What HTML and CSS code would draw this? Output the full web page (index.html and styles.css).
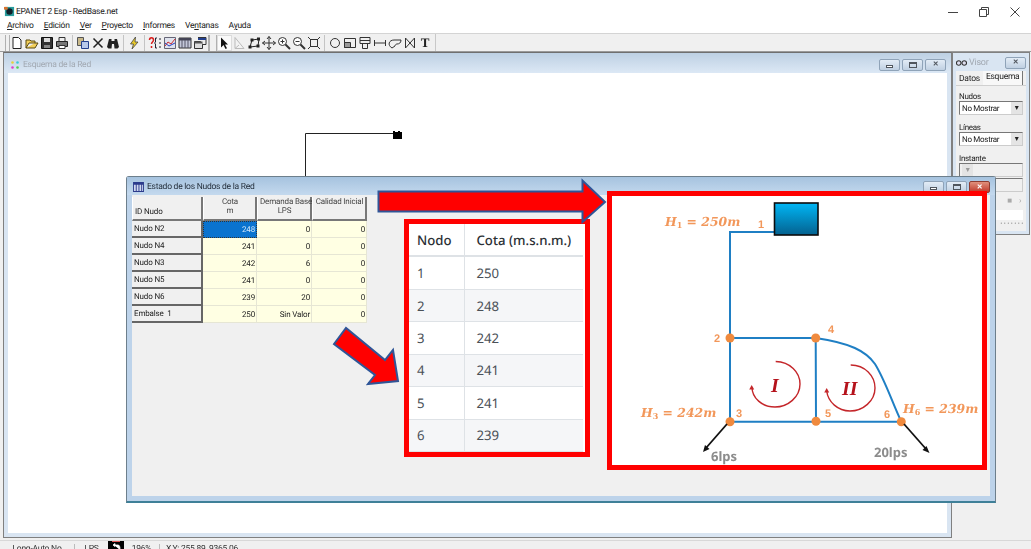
FILE: index.html
```html
<!DOCTYPE html>
<html lang="en">
<head>
  <meta charset="UTF-8">
  <title>EPANET 2 Esp - RedBase.net</title>
  <link rel="stylesheet" href="styles.css">
</head>
<body>
  <header class="titlebar">
    <svg class="app-icon" viewBox="0 0 12 12"><rect x="1" y="1" width="10" height="10" fill="#2a9d9d"/><circle cx="6" cy="6" r="3.5" fill="#10202a"/><rect x="0" y="1" width="4" height="3" fill="#d9722e"/></svg>
    <span class="app-name">EPANET 2 Esp - RedBase.net</span>
    <div class="win-controls">
      <svg viewBox="0 0 10 10"><path d="M0 5.5H10" stroke="#444"/></svg>
      <svg viewBox="0 0 10 10"><path d="M.5 2.5h7v7h-7zM2.5 2.5v-2h7v7h-2" fill="none" stroke="#444"/></svg>
      <svg viewBox="0 0 10 10"><path d="M.5 .5l9 9M9.5 .5l-9 9" stroke="#444"/></svg>
    </div>
  </header>

  <nav class="menubar">
    <span><u>A</u>rchivo</span>
    <span><u>E</u>dición</span>
    <span><u>V</u>er</span>
    <span><u>P</u>royecto</span>
    <span><u>I</u>nformes</span>
    <span>Ve<u>n</u>tanas</span>
    <span>A<u>y</u>uda</span>
  </nav>

  <div class="toolbar">
    <div class="tools">
      <i class="grip"></i>
      <b class="tool"><svg viewBox="0 0 14 14"><path d="M3 1.5h5.5l2.5 2.5v8.5H3z" fill="#fff" stroke="#222"/></svg></b>
      <b class="tool"><svg viewBox="0 0 14 14"><path d="M1 12V4h4l1 1h4v2H4l-3 5h9l3-5H10" fill="#f2cf5a" stroke="#5a4a10"/></svg></b>
      <b class="tool"><svg viewBox="0 0 14 14"><path d="M1.5 1.5h11v11h-11z" fill="#333" stroke="#111"/><path d="M4 2h6v4H4z" fill="#ddd"/><path d="M4 9h6v3H4z" fill="#888"/></svg></b>
      <b class="tool"><svg viewBox="0 0 14 14"><path d="M4 1.5h6v4H4z" fill="#eee" stroke="#333"/><path d="M1.5 5.5h11v5h-11z" fill="#777" stroke="#222"/><path d="M4 9.5h6v3H4z" fill="#fff" stroke="#333"/></svg></b>
      <i class="sep"></i>
      <b class="tool"><svg viewBox="0 0 14 14"><path d="M1.5 1.5h6v8h-6z" fill="#c9b98a" stroke="#555"/><path d="M5.5 5.5h7v7h-7z" fill="#b7c8ea" stroke="#24408e"/></svg></b>
      <b class="tool"><svg viewBox="0 0 14 14"><path d="M2.5 2.5l9 9M11.5 2.5l-9 9" stroke="#222" stroke-width="1.5"/></svg></b>
      <b class="tool"><svg viewBox="0 0 14 14"><path d="M1 11l2-8h2.5v2h3V3H11l2 8-1.5 1.5h-3L8 8H6l-.5 4.5h-3z" fill="#222"/></svg></b>
      <i class="sep"></i>
      <b class="tool"><svg viewBox="0 0 14 14"><path d="M8.5 1L3.5 8h3L5 13l6-7H8z" fill="#e8c92a" stroke="#444" stroke-width=".8"/></svg></b>
      <i class="sep"></i>
      <b class="tool"><svg viewBox="0 0 14 14"><path d="M1.500 4c0-3 4-3 4 0 0 2-2 2-2 4M3.500 10v2" fill="none" stroke="#d81e1e" stroke-width="1.500"/><path d="M9 2H7.500v4l-1 1 1 1v4H9M11 3h2M11 7h2M11 11h2" fill="none" stroke="#223"/></svg></b>
      <b class="tool"><svg viewBox="0 0 14 14"><path d="M1.500 1.500h11v11h-11z" fill="#dfe3ee" stroke="#667"/><path d="M2 10l3-4 3 2 4-5" fill="none" stroke="#d02a2a"/><path d="M2 7l4 3 6-3" fill="none" stroke="#2a40c0"/></svg></b>
      <b class="tool"><svg viewBox="0 0 14 14"><path d="M1 2h12v10H1z" fill="#c4c8da" stroke="#333"/><path d="M1 2h12v2.500H1z" fill="#445"/><path d="M4 4v8M7 4v8M10 4v8" stroke="#556"/></svg></b>
      <b class="tool"><svg viewBox="0 0 14 14"><path d="M1.500 5.500h8v7h-8z" fill="#ddd" stroke="#333"/><path d="M5 1.500h8v7h-3" fill="#eee" stroke="#333"/><path d="M5 2h8v2H5z" fill="#24408e"/><path d="M1.500 5.500h8v2h-8z" fill="#555"/></svg></b>
      <i class="grip wide"></i>
      <b class="tool on"><svg viewBox="0 0 14 14"><path d="M4 1.500v10l2.500-2.500 2 4 1.500-.8-2-3.700H11z" fill="#111"/></svg></b>
      <b class="tool"><svg viewBox="0 0 14 14"><path d="M3 1.500v11h9z M3 12.500L7 9" fill="#f3f3f3" stroke="#bbb"/></svg></b>
      <b class="tool"><svg viewBox="0 0 14 14"><path d="M3 11L5 4l7-1-1 7z" fill="none" stroke="#222"/><path d="M1.500 9.500h3v3h-3zM3.500 2.500h3v3h-3zM10 1.500h3v3h-3zM9.500 8.500h3v3h-3z" fill="#222"/></svg></b>
      <b class="tool"><svg viewBox="0 0 14 14"><path d="M7 .5v13M.5 7h13M5 3l2-2.500L9 3M5 11l2 2.500L9 11M3 5L.5 7 3 9M11 5l2.500 2L11 9" fill="none" stroke="#333"/></svg></b>
      <b class="tool"><svg viewBox="0 0 14 14"><circle cx="5.500" cy="5.500" r="4" fill="#fff" stroke="#333"/><path d="M8.500 8.500l4.500 4.500" stroke="#333" stroke-width="2"/><path d="M3.500 5.500h4M5.500 3.500v4" stroke="#333"/></svg></b>
      <b class="tool"><svg viewBox="0 0 14 14"><circle cx="5.500" cy="5.500" r="4" fill="#fff" stroke="#333"/><path d="M8.500 8.500l4.500 4.500" stroke="#333" stroke-width="2"/><path d="M3.500 5.500h4" stroke="#333"/></svg></b>
      <b class="tool"><svg viewBox="0 0 14 14"><path d="M3.500 3.500h7v7h-7z" fill="none" stroke="#333"/><path d="M1 1l3 3M13 1l-3 3M1 13l3-3M13 13l-3-3" stroke="#333"/></svg></b>
      <i class="sep"></i>
      <b class="tool"><svg viewBox="0 0 14 14"><circle cx="7" cy="7" r="4.500" fill="none" stroke="#333"/></svg></b>
      <b class="tool"><svg viewBox="0 0 14 14"><path d="M1.500 2.500h11v9h-11z" fill="none" stroke="#333"/><path d="M1.500 6.500h6v5h-6z" fill="#999" stroke="#333"/></svg></b>
      <b class="tool"><svg viewBox="0 0 14 14"><path d="M2 1.500h10v6H2zM4.500 7.500v5h5v-5M2 4.500h10" fill="none" stroke="#333"/></svg></b>
      <b class="tool"><svg viewBox="0 0 14 14"><path d="M1.500 4v6M12.500 4v6M1.500 7h11" stroke="#333"/></svg></b>
      <b class="tool"><svg viewBox="0 0 14 14"><path d="M4 12c-5-3-3-8 2-8h7c0 3-2 4-4 4-1 0-2 1-2 2z" fill="none" stroke="#333"/></svg></b>
      <b class="tool"><svg viewBox="0 0 14 14"><path d="M2.500 2v10l9-10v10z" fill="none" stroke="#333"/></svg></b>
      <b class="tool text-tool">T</b>
    </div>
  </div>

  <main class="workspace">
    <section class="window network-win">
      <div class="win-title">
        <svg class="dots" viewBox="0 0 8 8"><circle cx="1.500" cy="1.500" r="1.300" fill="#e8d23a"/><circle cx="6.500" cy="1.500" r="1.300" fill="#3ac8d8"/><circle cx="1.500" cy="6.500" r="1.300" fill="#e040c8"/><circle cx="6.500" cy="6.500" r="1.300" fill="#50d050"/></svg>
        <span>Esquema de la Red</span>
        <div class="win-btns">
          <b class="btn"><em class="g-min"></em></b><b class="btn"><em class="g-max"></em></b><b class="btn"><em class="g-x">✕</em></b>
        </div>
      </div>
      <div class="canvas">
        <svg class="network" width="938" height="120" viewBox="8 73 938 120">
          <path d="M305.500 176V133.500H395" fill="none" stroke="#222"/>
          <path d="M393 131h2v1h3v-1h2v1h2v7h-9z" fill="#000"/>
        </svg>
      </div>
    </section>

    <aside class="window visor">
      <div class="visor-title">
        <svg class="eyes" viewBox="0 0 12 8"><circle cx="3" cy="4" r="2.500" fill="#dde" stroke="#333" stroke-width="1.200"/><circle cx="9" cy="4" r="2.500" fill="#dde" stroke="#333" stroke-width="1.200"/></svg>
        <span>Visor</span>
        <b class="btn"><em class="g-x">✕</em></b>
      </div>
      <div class="tabs"><span>Datos</span><span class="tab-on">Esquema</span></div>
      <div class="panel">
        <label>Nudos</label>
        <div class="combo">No Mostrar<i>▾</i></div>
        <label>Líneas</label>
        <div class="combo">No Mostrar<i>▾</i></div>
        <label>Instante</label>
        <div class="combo off"><i>▾</i></div>
        <div class="combo off"><i>▸</i></div>
        <div class="play"><b>■</b><span>›</span></div>
        <div class="speed"></div>
        <div class="ticks">· · · · · · ·</div>
      </div>
    </aside>

    <section class="window status-win">
      <div class="win-title">
        <svg class="grid-icon" viewBox="0 0 12 11"><path d="M0 0h12v11H0z" fill="#2b3a8c"/><path d="M1 3h2v7H1zM4 3h2v7H4zM7 3h2v7H7zM10 3h1v7h-1z" fill="#cfd6ee"/></svg>
        <span>Estado de los Nudos de la Red</span>
        <div class="win-btns">
          <b class="btn"><em class="g-min"></em></b><b class="btn"><em class="g-max"></em></b><b class="btn btn-close"><em class="g-x">✕</em></b>
        </div>
      </div>
      <div class="win-body">
        <table class="grid">
          <thead>
            <tr><th class="id-head">ID Nudo</th><th>Cota<br>m</th><th>Demanda Base<br>LPS</th><th>Calidad Inicial</th></tr>
          </thead>
          <tbody>
            <tr><th>Nudo N2</th><td class="sel">248</td><td>0</td><td>0</td></tr>
            <tr><th>Nudo N4</th><td>241</td><td>0</td><td>0</td></tr>
            <tr><th>Nudo N3</th><td>242</td><td>6</td><td>0</td></tr>
            <tr><th>Nudo N5</th><td>241</td><td>0</td><td>0</td></tr>
            <tr><th>Nudo N6</th><td>239</td><td>20</td><td>0</td></tr>
            <tr><th>Embalse&nbsp; 1</th><td>250</td><td>Sin Valor</td><td>0</td></tr>
          </tbody>
        </table>
      </div>
    </section>

    <div class="note-table">
      <table>
        <thead><tr><th>Nodo</th><th>Cota (m.s.n.m.)</th></tr></thead>
        <tbody>
          <tr><td>1</td><td>250</td></tr>
          <tr><td>2</td><td>248</td></tr>
          <tr><td>3</td><td>242</td></tr>
          <tr><td>4</td><td>241</td></tr>
          <tr><td>5</td><td>241</td></tr>
          <tr><td>6</td><td>239</td></tr>
        </tbody>
      </table>
    </div>

    <div class="note-diagram">
      <svg width="370" height="269" viewBox="612 196 370 269">
        <defs>
          <linearGradient id="water" x1="0" y1="0" x2="0" y2="1"><stop offset="0" stop-color="#00b6f5"/><stop offset="1" stop-color="#04618f"/></linearGradient>
        </defs>
        <g fill="none" stroke="#1f7fc4" stroke-width="2">
          <path d="M774 232H730V421.700H901.300"/>
          <path d="M730 338H815.700L816 421.700"/>
          <path d="M815.700 338C850 343 866 351 875 364C885 380 892 402 901.300 421.700"/>
        </g>
        <rect x="774.500" y="203" width="43.500" height="32" fill="url(#water)" stroke="#0c0c0c" stroke-width="1.600"/>
        <g fill="#f08a3e">
          <circle cx="730" cy="338" r="4.500"/><circle cx="815.700" cy="338" r="4.500"/><circle cx="730" cy="421.700" r="4.500"/><circle cx="816" cy="421.300" r="4.500"/><circle cx="901.300" cy="421.700" r="4.500"/>
        </g>
        <g stroke="#111" stroke-width="1.800" fill="#111">
          <path d="M727 424L706 448"/><path d="M703 452l2-7 4.500 4z" stroke="none"/>
          <path d="M904 424L926 449"/><path d="M929.500 453l-7-3 4-4z" stroke="none"/>
        </g>
        <g fill="none" stroke="#c4262a" stroke-width="1.400">
          <path d="M775.700 361.500C790 362 800 372 800 384C800 397 788 407 775 407C762 407 752 398 752 387"/>
          <path d="M850.700 365C865 365 875 376 875 388C875 401 863 411 850 411C838 411 828 402 826.700 391"/>
        </g>
        <g fill="#c4262a"><path d="M751.700 385l-2.500 4.500h5z"/><path d="M826.700 388l-2.500 4.500h5z"/></g>
        <g class="eq">
          <text x="665" y="226">H<tspan class="sub" dy="2">1</tspan><tspan dy="-2"> = 250m</tspan></text>
          <text x="641" y="417">H<tspan class="sub" dy="2">3</tspan><tspan dy="-2"> = 242m</tspan></text>
          <text x="903" y="413">H<tspan class="sub" dy="2">6</tspan><tspan dy="-2"> = 239m</tspan></text>
        </g>
        <g class="num">
          <text x="758" y="228">1</text><text x="714" y="342">2</text><text x="736" y="417">3</text><text x="828" y="333">4</text><text x="825" y="417">5</text><text x="884" y="418">6</text>
        </g>
        <g class="flow"><text x="711" y="461">6lps</text><text x="874" y="457">20lps</text></g>
        <g class="loop"><text x="771" y="392">I</text><text x="842" y="395">II</text></g>
      </svg>
    </div>

    <svg class="arrow arrow-right" width="232" height="46" viewBox="376 178 232 46">
      <path d="M378.500 191.500H582.500V180.500L605 202L582.500 222V211.500H378.500Z"/>
    </svg>
    <svg class="arrow arrow-diag" width="70" height="60" viewBox="332 326 70 60">
      <path d="M334 344L346 328L385 360L393 350L398 381L368 384L375 375Z"/>
    </svg>
  </main>

  <footer class="statusbar">
    <span class="st-auto">Long-Auto No</span>
    <span class="st-units">LPS</span>
    <svg class="st-run" viewBox="0 0 16 9"><path d="M0 0h16v9H0z" fill="#000"/><path d="M4 .5h8" stroke="#e25555"/><path d="M6 4h4c2 0 2 3 2 5M5 4l2-1.500v3z" stroke="#fff" fill="#fff" stroke-width=".8"/></svg>
    <span class="st-zoom">196%</span>
    <span class="st-xy">X,Y: 255.89, 9365.06</span>
  </footer>
</body>
</html>
```

FILE: styles.css
```css
* {
  box-sizing: border-box;
}

html, body {
  height: 100%;
}

body {
  margin: 0;
  display: flex;
  flex-direction: column;
  overflow: hidden;
  background: #f0f0f0;
  color: #222;
  font-family: Roboto, sans-serif;
  font-size: 8.500px;
  letter-spacing: -.25px;
  text-rendering: geometricPrecision;
  filter: blur(.3px);
}

/* app chrome */
.titlebar {
  height: 20px;
  display: flex;
  align-items: center;
  padding: 3px 0 0 4px;
  background: #fff;
}

.app-icon {
  width: 11px;
  height: 11px;
  margin-right: 1px;
}

.win-controls {
  margin-left: auto;
  display: flex;
  gap: 21px;
  padding-right: 11px;
}

.win-controls svg {
  width: 10px;
  height: 10px;
}

.menubar {
  height: 13px;
  display: flex;
  gap: 10px;
  padding-left: 7px;
  background: #fff;
  line-height: 12px;
}

.toolbar {
  height: 19px;
  border-top: 1px solid #d4d4d4;
  border-bottom: 1px solid #9a9a9a;
  background: #f0f0f0;
}

.tools {
  width: 436px;
  height: 100%;
  display: flex;
  align-items: center;
  padding-left: 5px;
  border-right: 1px solid #c8c8c8;
}

.tool {
  width: 15px;
  height: 16px;
  display: flex;
  align-items: center;
  justify-content: center;
}

.tool svg {
  width: 14px;
  height: 14px;
}

.tool.on {
  background: #fafafa;
  box-shadow: inset 0 0 0 1px #dcdcdc;
}

.text-tool {
  font-family: "Liberation Serif", serif;
  font-size: 13px;
}

.sep {
  width: 6px;
  height: 16px;
  background: linear-gradient(#c4c4c4, #c4c4c4) center / 1px 100% no-repeat;
}

.grip {
  width: 5px;
  height: 16px;
  border-left: 1px solid #b0b0b0;
  border-right: 1px solid #b0b0b0;
  margin-right: -.5px;
}

.grip.wide {
  width: 9px;
  margin: 0;
  border-left-width: 2px;
}

/* desktop area, the windows sit on it */
.workspace {
  position: relative;
  flex: 1;
  overflow: hidden;
}

.window {
  position: absolute;
  display: flex;
  flex-direction: column;
}

.win-title {
  display: flex;
  align-items: center;
}

.win-btns {
  margin-left: auto;
  display: flex;
  gap: 2px;
}

.btn {
  width: 21px;
  height: 12px;
  display: flex;
  align-items: center;
  justify-content: center;
  border: 1px solid #8fa3b8;
  border-radius: 2px;
  background: linear-gradient(#e3ecf6, #c0d0e2);
}

.btn em {
  font-style: normal;
  color: #50565e;
  font-size: 7px;
  line-height: 1;
}

.g-min {
  width: 7px;
  height: 3px;
  margin-top: 3px;
  border: 1px solid #50565e;
  background: #fff;
}

.g-max {
  width: 8px;
  height: 6px;
  border: 1px solid #50565e;
  border-top-width: 2px;
}

.btn-close {
  border-color: #8e3b30;
  background: linear-gradient(#e0907c, #c0392b);
}

.btn-close em {
  color: #fff;
}

.network-win {
  left: 3px;
  top: 0;
  width: 949px;
  height: 486px;
  padding: 0 4px 4px;
  border: 1px solid #808080;
  border-top-color: #6f6f6f;
  background: #d9e5f2;
}

.network-win .win-title {
  height: 20px;
  margin: 0 -4px;
  padding: 3px 5px 0 7px;
  background: linear-gradient(#bdd0e3, #dce8f5);
  color: #a2a9b2;
}

.dots {
  width: 8px;
  height: 8px;
  margin-right: 4px;
}

.canvas {
  flex: 1;
  background: #fff;
}

.network {
  display: block;
  overflow: visible;
}

.visor {
  left: 952px;
  top: 0;
  width: 78px;
  height: 183px;
  padding: 1px 3px 3px;
  border: 1px solid #808080;
  background: #d9e5f2;
}

.visor-title {
  height: 17px;
  display: flex;
  align-items: center;
  gap: 2px;
  color: #a2a9b2;
  font-size: 9px;
}

.eyes {
  width: 11px;
  height: 8px;
}

.visor-title .btn {
  margin-left: auto;
}

.tabs {
  height: 14px;
  display: flex;
  align-items: flex-end;
  background: #f0f0f0;
}

.tabs span {
  padding: 0 3px;
  line-height: 12px;
}

.tab-on {
  height: 14px;
  padding: 0 4px 0 5px;
  border-right: 1px solid #777;
  background: #f8f8f8;
}

.panel {
  flex: 1;
  display: flex;
  flex-direction: column;
  padding: 6px 3px 0 3px;
  background: #f0f0f0;
  border-top: 1px solid #d0d0d0;
  font-size: 8px;
  letter-spacing: -.3px;
}

.panel label {
  line-height: 9px;
  height: 9px;
}

.combo {
  flex: none;
  height: 14px;
  display: flex;
  align-items: center;
  justify-content: space-between;
  padding-left: 2px;
  margin-bottom: 8px;
  border: 1px solid #777;
  border-right-color: #ccc;
  border-bottom-color: #ccc;
  background: #fff;
}

.combo i {
  width: 11px;
  height: 12px;
  background: #e4e4e4;
  font-style: normal;
  text-align: center;
  line-height: 12px;
}

.combo.off {
  margin-bottom: 1px;
  background: #f0f0f0;
  color: #999;
}

.combo.off + .combo.off {
  margin-bottom: 0;
}

.play {
  height: 17px;
  display: flex;
  justify-content: flex-end;
  align-items: center;
  gap: 7px;
  padding-right: 2px;
  color: #aaa;
}

.speed {
  height: 10px;
  background: #fff;
  margin-top: 1px;
}

.ticks {
  text-align: right;
  line-height: 8px;
  color: #444;
}

.status-win {
  left: 126px;
  top: 124px;
  width: 870px;
  height: 327px;
  padding: 0 5px 5px;
  border: 1px solid #6d7f8c;
  border-bottom: 2px solid #3f8098;
  border-radius: 3px 3px 0 0;
  background: #bdd3ea;
}

.status-win .win-title {
  height: 18px;
  margin: 0 -5px;
  padding: 2px 5px 0 6px;
  background: linear-gradient(#a6c3df, #c4d9ee);
  color: #1f2a36;
}

.grid-icon {
  width: 11px;
  height: 10px;
  margin-right: 3px;
}

.win-body {
  flex: 1;
  padding: 2px 0;
  background: #f0f0f0;
}

/* data grid */
.grid {
  border-collapse: separate;
  border-spacing: 0;
  table-layout: fixed;
  width: 235px;
  font-size: 8px;
  letter-spacing: -.15px;
}

.grid th, .grid td {
  height: 17px;
  padding: 0 1px 0 2px;
  font-weight: normal;
  white-space: nowrap;
}

.grid thead th {
  height: 24px;
  width: 55px;
  vertical-align: top;
  line-height: 9px;
  background: #f0f0f0;
  border-right: 2px solid #777;
  border-bottom: 2px solid #777;
  border-left: 1px solid #fff;
  color: #444;
}

.grid thead th:nth-child(2) {
  width: 54px;
}

.grid thead .id-head {
  width: 71px;
  text-align: left;
  vertical-align: bottom;
  padding: 0 0 3px 2px;
  color: #222;
}

.grid tbody th {
  text-align: left;
  background: #f0f0f0;
  border-right: 2px solid #666;
  border-bottom: 2px solid #666;
}

.grid td {
  text-align: right;
  background: #ffffe3;
  border-right: 1px solid #e6e6d4;
  border-bottom: 1px solid #e6e6d4;
}

.grid .sel {
  background: #0a73cf;
  color: #cfe6fa;
  border: 1px dotted #333;
}

/* pasted pictures on top of the program */
.note-table {
  position: absolute;
  left: 404px;
  top: 167px;
  width: 186px;
  height: 238px;
  border: 5px solid #f00;
  background: #fff;
}

.note-table table {
  width: 174px;
  height: 100%;
  border-collapse: collapse;
  table-layout: fixed;
  color: #4a5057;
  font-family: "Noto Sans", sans-serif;
  font-size: 13.200px;
  letter-spacing: 0;
}

.note-table th, .note-table td {
  padding: 0 0 0 12px;
  text-align: left;
  border-bottom: 1px solid #dee2e6;
}

.note-table th:first-child, .note-table td:first-child {
  width: 55px;
  padding-left: 8px;
  border-right: 1px solid #dee2e6;
}

.note-table thead th {
  height: 32px;
  font-weight: 500;
  color: #2b3035;
  border-bottom-width: 2px;
}

.note-table tbody tr:nth-child(even) {
  background: #f5f6f8;
}

.note-diagram {
  position: absolute;
  left: 607px;
  top: 139px;
  width: 380px;
  height: 279px;
  border: 5px solid #f00;
  background: #fff;
  letter-spacing: 0;
}

.note-diagram svg {
  display: block;
}

.eq text {
  font-family: "DejaVu Serif", serif;
  font-size: 12.400px;
  font-style: italic;
  font-weight: bold;
  fill: #f2975a;
}

.eq .sub {
  font-size: 8px;
  font-style: normal;
}

.num text {
  font-family: "Liberation Sans", sans-serif;
  font-size: 11px;
  font-weight: bold;
  fill: #f2975a;
}

.flow text {
  font-family: "Noto Sans", sans-serif;
  font-size: 13px;
  font-weight: bold;
  fill: #8c8c8c;
}

.loop text {
  font-family: "Liberation Serif", serif;
  font-size: 20px;
  font-style: italic;
  font-weight: bold;
  fill: #b5121b;
}

.arrow {
  position: absolute;
}

.arrow path {
  fill: #f00;
  stroke: #2f5597;
  stroke-width: 2;
}

.arrow-right {
  left: 376px;
  top: 126px;
}

.arrow-diag {
  left: 332px;
  top: 274px;
}

/* bottom strip, cut by the edge of the window */
.statusbar {
  height: 9px;
  display: flex;
  align-items: flex-start;
  overflow: hidden;
  border-top: 1px solid #d8d8d8;
  background: #f0f0f0;
  line-height: 11px;
  padding-top: 3px;
  color: #333;
}

.statusbar span {
  height: 11px;
  text-align: center;
}

.st-auto {
  width: 75px;
  border-right: 1px solid #bbb;
}

.st-units {
  width: 33px;
}

.st-run {
  width: 16px;
  height: 9px;
  margin-top: -3px;
}

.st-zoom {
  width: 36px;
  border-right: 1px solid #bbb;
}

.st-xy {
  padding-left: 6px;
}
```
